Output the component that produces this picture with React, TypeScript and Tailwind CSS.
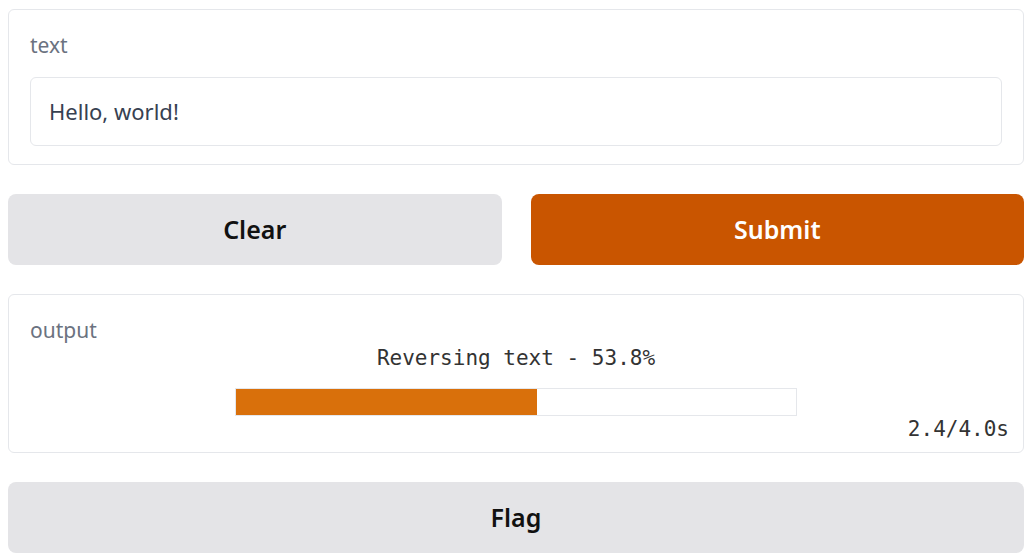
import React from 'react';

export default function App() {
  const progress = 53.8;

  return (
    <div className="flex flex-col gap-[29px] bg-white pl-[8px] pr-[10px] pt-[9px] pb-[6px] font-['Noto_Sans','Open_Sans',sans-serif]">
      <div className="rounded-[6px] border border-[#e5e7eb] bg-white px-[21px] pt-[22px] pb-[18px]">
        <div className="text-[21px] leading-[26px] text-[#6b7280]">text</div>
        <div className="mt-[19px] flex h-[69px] items-center rounded-[6px] border border-[#e5e7eb] px-[18px] text-[22px] text-[#374151]">
          Hello, world!
        </div>
      </div>

      <div className="flex gap-[29px]">
        <button className="flex h-[71px] flex-1 items-center justify-center rounded-[8px] bg-[#e4e4e7] text-[25px] font-semibold text-[#111]">
          Clear
        </button>
        <button className="flex h-[71px] flex-1 items-center justify-center rounded-[8px] bg-[#c95500] text-[25px] font-semibold text-white">
          Submit
        </button>
      </div>

      <div className="rounded-[6px] border border-[#e5e7eb] bg-white px-[21px] pt-[22px] pb-[10px]">
        <div className="text-[21px] leading-[26px] text-[#6b7280]">output</div>
        <div className="mt-[3px] text-center font-['DejaVu_Sans_Mono',monospace] text-[21px] leading-[25px] text-[#333]">
          Reversing text - {progress}%
        </div>
        <div className="mx-auto mt-[17px] h-[28px] w-[562px] border border-[#e5e7eb] bg-white">
          <div className="h-full bg-[#d9700b]" style={{ width: `${progress}%` }} />
        </div>
        <div className="-mr-[7px] mt-[1px] text-right font-['DejaVu_Sans_Mono',monospace] text-[21px] leading-[25px] text-[#333]">
          2.4/4.0s
        </div>
      </div>

      <button className="flex h-[71px] items-center justify-center rounded-[8px] bg-[#e4e4e7] text-[25px] font-semibold text-[#111]">
        Flag
      </button>
    </div>
  );
}
